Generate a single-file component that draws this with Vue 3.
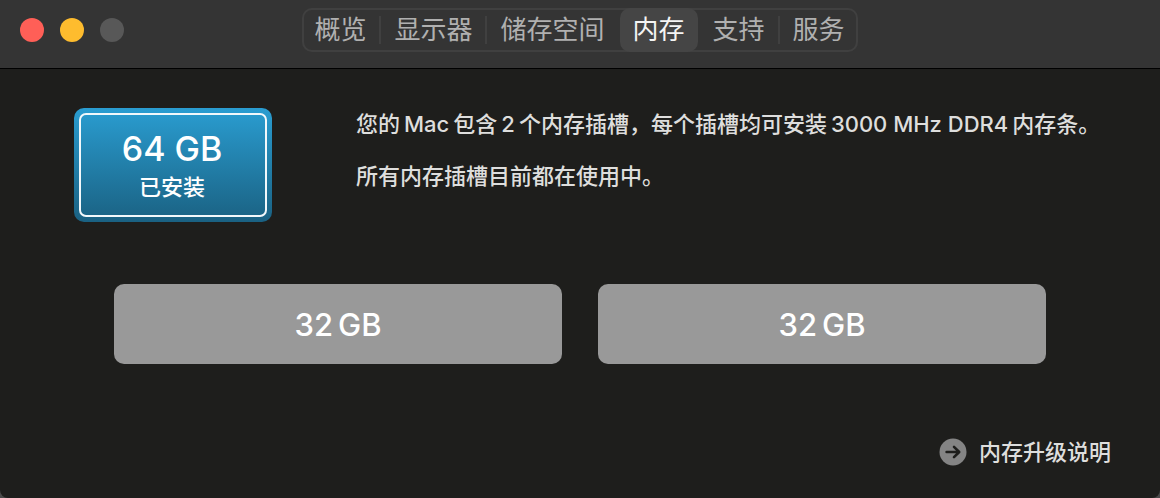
<script setup>
import { ref } from 'vue'

const lights = [
  { name: 'close', label: '关闭' },
  { name: 'minimize', label: '最小化' },
  { name: 'zoom', label: '缩放' },
]
const tabs = ['概览', '显示器', '储存空间', '内存', '支持', '服务']
const active = ref(3)
const slots = [32, 32]

function hasDivider(i) {
  return i > 0 && i !== active.value && i - 1 !== active.value
}
</script>

<template>
  <div class="window">
    <header class="titlebar">
      <div class="lights">
        <button
          v-for="light in lights"
          :key="light.name"
          type="button"
          class="light"
          :class="light.name"
          :aria-label="light.label"
          :disabled="light.name === 'zoom'"
        ></button>
      </div>
      <nav class="tabs">
        <template v-for="(tab, i) in tabs" :key="tab">
          <span v-if="i > 0" class="divider" :class="{ shown: hasDivider(i) }"></span>
          <button type="button" class="tab" :class="{ active: i === active }" @click="active = i">{{ tab }}</button>
        </template>
      </nav>
    </header>

    <main class="content">
      <section class="summary">
        <div class="badge">
          <div class="badge-inner">
            <strong class="total">64 GB</strong>
            <span class="installed">已安装</span>
          </div>
        </div>
        <div class="description">
          <p>您的<span class="latin">Mac</span>包含<span class="latin">2</span>个内存插槽，每个插槽均可安装<span class="latin">3000 MHz DDR4</span>内存条。</p>
          <p>所有内存插槽目前都在使用中。</p>
        </div>
      </section>

      <section class="slots">
        <div v-for="(size, i) in slots" :key="i" class="slot">
          <span>{{ size }}</span><span>GB</span>
        </div>
      </section>

      <footer class="footer">
        <a href="#" class="help">
          <svg class="arrow" viewBox="0 0 28 28" aria-hidden="true">
            <circle cx="14" cy="14" r="13.5" fill="#848484" />
            <path d="M7.6 14H20M15 8.8L20.2 14L15 19.2" fill="none" stroke="#1e1e1c" stroke-width="2.6" stroke-linecap="round" stroke-linejoin="round" />
          </svg>
          内存升级说明
        </a>
      </footer>
    </main>
  </div>
</template>

<style>
body {
  background: #4a4a4a;
}
</style>

<style scoped>
.window {
  box-sizing: border-box;
  min-height: 100vh;
  display: flex;
  flex-direction: column;
  overflow: hidden;
  border-radius: 0 0 8px 8px;
  background: #1e1e1c;
  color: #dededd;
  font-family: Inter, "Noto Sans CJK SC", sans-serif;
  font-size: 22px;
  line-height: 32px;
}

button {
  margin: 0;
  border: 0;
  font: inherit;
}

.titlebar {
  display: grid;
  grid-template-columns: 1fr auto 1fr;
  align-items: start;
  padding: 8px 20px 16px;
  background: #343434;
  border-bottom: 1px solid #000;
}

.lights {
  display: flex;
  gap: 16px;
  padding-top: 10px;
}

.light {
  width: 24px;
  height: 24px;
  padding: 0;
  border-radius: 50%;
}

.close {
  background: #ff5f57;
}

.minimize {
  background: #febc2e;
}

.zoom {
  background: #585858;
}

.tabs {
  display: flex;
  align-items: center;
  border-radius: 10px;
  box-shadow: inset 0 0 0 2px #404040;
}

.tab {
  height: 44px;
  padding: 0 13px;
  border-radius: 10px;
  background: transparent;
  color: #b0b0b0;
  font-size: 26px;
  line-height: 44px;
}

.tab:first-child {
  padding-left: 12px;
}

.tab.active {
  background: #454545;
  color: #f4f4f4;
}

.divider {
  width: 2px;
  height: 28px;
}

.divider.shown {
  background: #404040;
}

.content {
  flex: 1;
  display: flex;
  flex-direction: column;
  padding: 39px 49px 30px 74px;
}

.summary {
  display: flex;
  align-items: flex-start;
  gap: 84px;
}

.badge {
  flex: none;
  box-sizing: border-box;
  width: 198px;
  padding: 5px;
  border-radius: 10px;
  background: linear-gradient(#2a9dd1, #1a6182);
}

.badge-inner {
  display: flex;
  flex-direction: column;
  align-items: center;
  padding: 12px 2px 12px 0;
  border: 2px solid #f2f8fb;
  border-radius: 7px;
  color: #fff;
}

.total {
  font-size: 34px;
  font-weight: 500;
  line-height: 44px;
}

.installed {
  font-weight: 500;
}

.description p {
  margin: 0 0 20px;
  font-weight: 500;
}

.latin {
  margin: 0 4px;
}

.slots {
  display: flex;
  gap: 36px;
  margin: 62px 65px 0 40px;
}

.slot {
  flex: 1;
  display: flex;
  align-items: center;
  justify-content: center;
  gap: 5px;
  box-sizing: border-box;
  height: 80px;
  padding-top: 2px;
  border-radius: 10px;
  background: #999;
  color: #fff;
  font-size: 31px;
  font-weight: 500;
}

.footer {
  display: flex;
  justify-content: flex-end;
  margin-top: auto;
}

.help {
  display: flex;
  align-items: center;
  gap: 12px;
  color: inherit;
  font-weight: 500;
  text-decoration: none;
}

.arrow {
  width: 28px;
  height: 28px;
}
</style>
